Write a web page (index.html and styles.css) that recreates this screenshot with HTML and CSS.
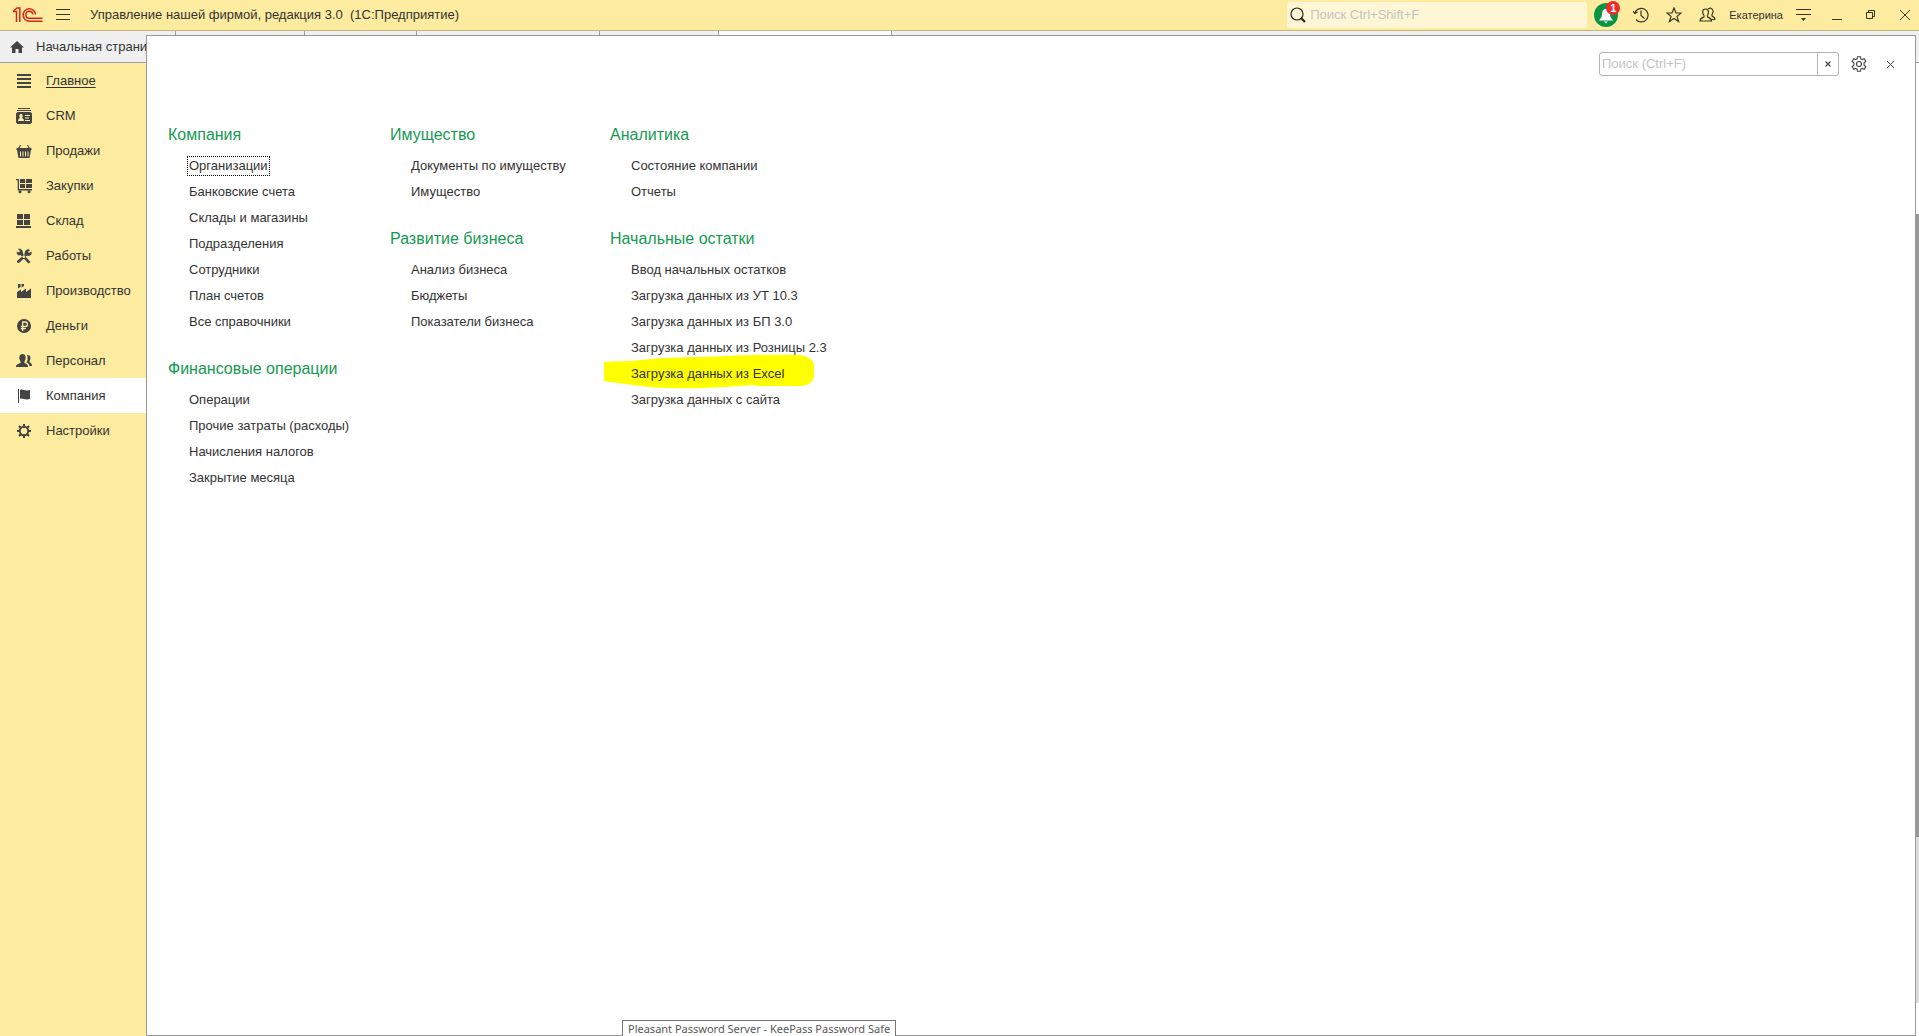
FILE: index.html
```html
<!DOCTYPE html>
<html lang="ru">
<head>
  <meta charset="UTF-8">
  <title>Управление нашей фирмой, редакция 3.0</title>
  <link rel="stylesheet" href="styles.css">
</head>
<body>
  <header class="titlebar">
    <svg class="logo" width="30" height="16" viewBox="0 0 30 16" fill="none" stroke="#d9261c" stroke-width="1.500">
      <path d="M0 4.500h3.500V15M0 4.500L4 1h2.800v14"/>
      <path d="M22.500 7.500A6.200 6.200 0 1 0 16.500 14.200H29.500M19.800 7.500A3.500 3.500 0 1 0 16.500 11.300H29.500"/>
    </svg>
    <button class="icon-btn menu-btn" aria-label="Меню">
      <svg width="14" height="12" viewBox="0 0 14 12" stroke="#3a3520"><path d="M0 .5h14M0 5.500h14M0 10.500h14"/></svg>
    </button>
    <h1 class="title">Управление нашей фирмой, редакция 3.0&nbsp; (1С:Предприятие)</h1>
    <label class="global-search">
      <svg width="16" height="16" viewBox="0 0 16 16" fill="none" stroke="#2b2718"><circle cx="7" cy="7" r="6" stroke-width="1.200"/><path d="M11 11l4 4" stroke-width="2.200"/></svg>
      <input type="text" placeholder="Поиск Ctrl+Shift+F" aria-label="Поиск Ctrl+Shift+F">
    </label>
    <div class="tools">
      <button class="bell" aria-label="Уведомления">
        <svg width="24" height="24" viewBox="0 0 24 24"><circle cx="12" cy="12" r="12" fill="#0b9444"/><path d="M12 6c-3 0-4 2.500-4 5.500 0 2.500-1.500 4-3 6h14c-1.500-2-3-3.500-3-6C16 8.500 15 6 12 6zM10 18.500h4l-2 2z" fill="#fff"/></svg>
        <span class="badge">1</span>
      </button>
      <button class="icon-btn" aria-label="История">
        <svg width="16" height="16" viewBox="0 0 16 16" fill="none" stroke="#3a3520" stroke-width="1.200"><path d="M1.800 6A6.800 6.800 0 1 1 3 12.500M0 4l1.800 2.500L4.500 5M8 3.500v5l3.500 3"/></svg>
      </button>
      <button class="icon-btn" aria-label="Избранное">
        <svg width="16" height="16" viewBox="0 0 16 16" fill="none" stroke="#3a3520" stroke-width="1.200"><path d="M8 1l2 5h5.200l-4.200 3.400 1.600 5.200L8 11.500l-4.600 3.100L5 9.400.8 6H6z"/></svg>
      </button>
      <button class="icon-btn" aria-label="Пользователь">
        <svg width="17" height="16" viewBox="0 0 17 16" fill="none" stroke="#3a3520" stroke-width="1.200"><path d="M1 14c0-2.500 2-3 4-4V8.500C3 6 3 2 6.500 2S10 6 8.500 8.500V10c2 1 4 1.500 4 4zM9 2c4-2.500 6.500 2 4 5.500V9c1.500.8 3 1.500 3 3.500h-4"/></svg>
      </button>
      <a href="#" class="user">Екатерина</a>
      <button class="icon-btn" aria-label="Сервис">
        <svg width="15" height="14" viewBox="0 0 15 14" fill="none" stroke="#3a3520" stroke-width="1.200"><path d="M0 1.500h15M0 6.500h15"/><path d="M5 10h5l-2.500 3z" fill="#3a3520" stroke="none"/></svg>
      </button>
      <button class="icon-btn win-btn" aria-label="Свернуть">
        <svg width="10" height="10" viewBox="0 0 10 10" stroke="#3a3520"><path d="M0 9.500h10"/></svg>
      </button>
      <button class="icon-btn win-btn" aria-label="Восстановить">
        <svg width="10" height="10" viewBox="0 0 10 10" fill="none" stroke="#3a3520"><path d="M.5 2.500h6v6h-6zM2.500 2.500v-2h6v6h-2"/></svg>
      </button>
      <button class="icon-btn win-btn" aria-label="Закрыть">
        <svg width="10" height="10" viewBox="0 0 10 10" stroke="#3a3520"><path d="M0 0l10 10M10 0L0 10"/></svg>
      </button>
    </div>
  </header>

  <nav class="tabs">
    <a href="#" class="tab tab-home">
      <svg width="14" height="12" viewBox="0 0 14 12" fill="#444"><path d="M7 0l7 6.500h-2V12H8.500V8h-3v4H2V6.500H0z"/></svg>
      Начальная страница
    </a>
    <span class="tab tab-2"></span>
    <span class="tab tab-3"></span>
    <span class="tab tab-4"></span>
    <span class="tab tab-5"></span>
    <span class="tab tab-active"></span>
  </nav>

  <div class="workspace">
    <nav class="sidebar">
      <a href="#" class="section current">
        <svg viewBox="0 0 16 16"><path d="M1 1h14v2H1zM1 5h14v2H1zM1 9h14v2H1zM1 13h14v2H1z"/></svg>
        Главное
      </a>
      <a href="#" class="section">
        <svg viewBox="0 0 16 16"><path d="M2 0h12v1H2zM1 2h14v1H1z"/><path fill-rule="evenodd" d="M1.500 4h13L16 5.500v9L14.500 16h-13L0 14.500v-9zM2 13h6c0-2-1-2.500-2-3 1-1.500.8-4-1-4s-2 2.500-1 4c-1 .5-2 1-2 3zM9 7v1h5V7zM9 9.500v1h4v-1zM9 12v1h5v-1z"/></svg>
        CRM
      </a>
      <a href="#" class="section">
        <svg viewBox="0 0 16 16"><path d="M4 2l1 .5L3.500 5h9L11 2.500l1-.5 2 3h1.500v2H.5V5H2z"/><path fill-rule="evenodd" d="M1 7h14l-1.500 8h-11zM4 8.500v5h1v-5zM6.500 8.500v5h1v-5zM9 8.500v5h1v-5zM11.500 8.500v5h1v-5z"/></svg>
        Продажи
      </a>
      <a href="#" class="section">
        <svg viewBox="0 0 16 16"><path d="M0 1h3v10h13v1.500H1.700V2.200H0zM4 1h5v4H4zM10 1h6v4h-6zM4 6h5v4H4zM10 6h6v4h-6z"/><circle cx="4" cy="13.800" r="1.500"/><circle cx="13" cy="13.800" r="1.500"/></svg>
        Закупки
      </a>
      <a href="#" class="section">
        <svg viewBox="0 0 16 16"><path d="M1 1h6v5H1zM8 1h6v5H8zM1 7h6v5H1zM8 7h6v5H8zM0 13h15v2H0z"/></svg>
        Склад
      </a>
      <a href="#" class="section">
        <svg viewBox="0 0 16 16"><path d="M2 1l2 2-1 1.500L1 3.500C0 6 2 8 4.500 7L11 14l1.500 1.500L14.500 14 7 6C7.500 3 5 0 2 1zM9 3l3-2 2 1-2 2 1 1 2.500-1.500c1 3-2 5.500-4.500 4L3 15l-2-.5L1 13l7.500-6.500z"/></svg>
        Работы
      </a>
      <a href="#" class="section">
        <svg viewBox="0 0 16 16"><path d="M1 15V9l4-2.500V9l5-3.500V9l5-3.500V15zM2 1h2.500v3L2 5.500zM5.500 1H8v2L5.500 4.500z"/></svg>
        Производство
      </a>
      <a href="#" class="section">
        <svg viewBox="0 0 16 16"><circle cx="8" cy="8" r="7"/><path d="M6.700 13V4h2.500a2.200 2.200 0 0 1 0 4.500H4.800M4.800 10.700h5" fill="none" stroke="#fdeca0" stroke-width="1.300"/></svg>
        Деньги
      </a>
      <a href="#" class="section">
        <svg viewBox="0 0 16 16"><path d="M0 14c0-3 2.500-3 4.500-4V8.500C2.500 5.500 3 1 6.500 1S10.500 5.500 8.500 8.500V10c2 1 3.500 1 3.500 4zM11 2c3.500-.5 4.500 3 2.500 6v1.200c1.500.8 2.500 1 2.500 3.800h-2.500c0-2-1.500-2.800-3-3.500C12 7 12 4.500 11 2z"/></svg>
        Персонал
      </a>
      <a href="#" class="section selected">
        <svg viewBox="0 0 16 16"><path d="M2 1h1v14H2zM4 2c3-1.500 4 1.500 10 0v9c-6 1.500-7-1.500-10 0z"/></svg>
        Компания
      </a>
      <a href="#" class="section">
        <svg viewBox="0 0 16 16"><circle cx="8" cy="8" r="4.200" fill="none" stroke="#444" stroke-width="2"/><path d="M8 1v2.500M8 12.500V15M1 8h2.500M12.500 8H15M3 3l2 2M11 11l2 2M13 3l-2 2M5 11l-2 2" stroke="#444" stroke-width="2"/></svg>
        Настройки
      </a>
    </nav>
    <div class="page-back"><span class="scroll-track"><span class="scroll-thumb"></span></span></div>
  </div>

  <main class="panel">
    <div class="panel-bar">
      <div class="panel-search">
        <input type="text" placeholder="Поиск (Ctrl+F)" aria-label="Поиск (Ctrl+F)">
        <button aria-label="Очистить">
          <svg width="6" height="6" viewBox="0 0 6 6" stroke="#444" stroke-width="1.200"><path d="M.5.5l5 5M5.500.5l-5 5"/></svg>
        </button>
      </div>
      <button class="icon-btn gear-btn" aria-label="Настройка">
        <svg width="16" height="16" viewBox="0 0 16 16" fill="none" stroke="#444" stroke-width="1.100"><circle cx="8" cy="8" r="2.500"/><path d="M6.500.7h3l.4 2.200 1.300.7 2.100-.8 1.500 2.600-1.700 1.400v2.400l1.700 1.400-1.500 2.600-2.100-.8-1.300.7-.4 2.200h-3l-.4-2.200-1.300-.7-2.100.8-1.500-2.600 1.700-1.400V6.800L1.200 5.400l1.500-2.600 2.100.8 1.300-.7z"/></svg>
      </button>
      <button class="icon-btn close-btn" aria-label="Закрыть">
        <svg width="7" height="7" viewBox="0 0 7 7" stroke="#444"><path d="M0 0l7 7M7 0L0 7"/></svg>
      </button>
    </div>

    <div class="columns">
      <div class="column">
        <section class="group">
          <h2>Компания</h2>
          <ul>
            <li><a href="#" class="focused">Организации</a></li>
            <li><a href="#">Банковские счета</a></li>
            <li><a href="#">Склады и магазины</a></li>
            <li><a href="#">Подразделения</a></li>
            <li><a href="#">Сотрудники</a></li>
            <li><a href="#">План счетов</a></li>
            <li><a href="#">Все справочники</a></li>
          </ul>
        </section>
        <section class="group">
          <h2>Финансовые операции</h2>
          <ul>
            <li><a href="#">Операции</a></li>
            <li><a href="#">Прочие затраты (расходы)</a></li>
            <li><a href="#">Начисления налогов</a></li>
            <li><a href="#">Закрытие месяца</a></li>
          </ul>
        </section>
      </div>
      <div class="column">
        <section class="group">
          <h2>Имущество</h2>
          <ul>
            <li><a href="#">Документы по имуществу</a></li>
            <li><a href="#">Имущество</a></li>
          </ul>
        </section>
        <section class="group">
          <h2>Развитие бизнеса</h2>
          <ul>
            <li><a href="#">Анализ бизнеса</a></li>
            <li><a href="#">Бюджеты</a></li>
            <li><a href="#">Показатели бизнеса</a></li>
          </ul>
        </section>
      </div>
      <div class="column">
        <section class="group">
          <h2>Аналитика</h2>
          <ul>
            <li><a href="#">Состояние компании</a></li>
            <li><a href="#">Отчеты</a></li>
          </ul>
        </section>
        <section class="group">
          <h2>Начальные остатки</h2>
          <ul>
            <li><a href="#">Ввод начальных остатков</a></li>
            <li><a href="#">Загрузка данных из УТ 10.3</a></li>
            <li><a href="#">Загрузка данных из БП 3.0</a></li>
            <li><a href="#">Загрузка данных из Розницы 2.3</a></li>
            <li class="marked">
              <svg class="marker" width="210" height="36" viewBox="0 0 210 36"><path d="M0 8Q18 7 28 7Q60 3 100 3Q150 0 196 1Q210 4 210 11V23Q209 30 198 32H152L150 31Q125 33 100 34Q70 35 45 33Q28 31 0 27z" fill="#ff0"/></svg>
              <a href="#">Загрузка данных из Excel</a>
            </li>
            <li><a href="#">Загрузка данных с сайта</a></li>
          </ul>
        </section>
      </div>
    </div>
  </main>

  <div class="taskbar-tip" role="tooltip">Pleasant Password Server - KeePass Password Safe</div>
</body>
</html>
```

FILE: styles.css
```css
* {
  box-sizing: border-box;
}
body {
  margin: 0;
  height: 100vh;
  display: flex;
  flex-direction: column;
  position: relative;
  overflow: hidden;
  font-family: "Liberation Sans", Arial, sans-serif;
  font-size: 13px;
  line-height: 16px;
  color: #333;
  background: #fff;
}
a {
  color: inherit;
  text-decoration: none;
}
button {
  padding: 0;
  border: 0;
  background: none;
  font: inherit;
}
input {
  font: inherit;
  border: 0;
  outline: 0;
  background: none;
}
svg {
  display: block;
  flex: none;
}

/* title bar */
.titlebar {
  flex: none;
  height: 31px;
  display: flex;
  align-items: center;
  padding: 0 6px 0 13px;
  background: #fdeca0;
  border-bottom: 1px solid #c2b67c;
}
.menu-btn {
  margin-left: 13px;
}
.title {
  margin: 0 auto 0 20px;
  font-size: 13px;
  font-weight: normal;
}
.icon-btn {
  display: flex;
  align-items: center;
  justify-content: center;
}
.global-search {
  width: 300px;
  height: 26px;
  display: flex;
  align-items: center;
  gap: 4px;
  padding: 0 3px;
  border-radius: 3px;
  background: #fff6d6;
}
.global-search input {
  flex: 1;
  min-width: 0;
  padding: 0;
}
input::placeholder {
  color: #c4c4c4;
  opacity: 1;
}
.tools {
  display: flex;
  align-items: center;
  gap: 17px;
  margin-left: 7px;
}
.bell {
  position: relative;
  margin-right: -2px;
}
.badge {
  position: absolute;
  top: -2px;
  right: -2px;
  width: 14px;
  height: 14px;
  border-radius: 50%;
  background: #ee2a2f;
  color: #fff;
  font-size: 11px;
  font-weight: bold;
  line-height: 14px;
  text-align: center;
}
.user {
  font-size: 11px;
  margin: 0 -4px;
}
.win-btn {
  width: 17px;
}

/* open windows */
.tabs {
  flex: none;
  height: 32px;
  display: flex;
  background: #f0f0f0;
  border-bottom: 1px solid #a0a0a0;
}
.tab {
  border-right: 1px solid #a0a0a0;
}
.tab-home {
  width: 176px;
  display: flex;
  align-items: center;
  gap: 12px;
  padding-left: 10px;
  white-space: nowrap;
}
.tab-2 {
  width: 129px;
}
.tab-3 {
  width: 112px;
}
.tab-4 {
  width: 183px;
}
.tab-5 {
  width: 119px;
}
.tab-active {
  width: 173px;
  background: #fff;
}

/* sections */
.workspace {
  flex: 1;
  display: flex;
}
.sidebar {
  width: 146px;
  background: #fdeca0;
}
.section {
  height: 35px;
  display: flex;
  align-items: center;
  gap: 14px;
  padding: 1px 0 0 16px;
}
.section svg {
  width: 16px;
  height: 16px;
  fill: #444;
}
.current {
  text-decoration: underline;
  text-underline-offset: 2px;
}
.selected {
  background: #fff;
}
.page-back {
  flex: 1;
  display: flex;
  justify-content: flex-end;
  padding: 151px 0 33px;
}
.scroll-track {
  width: 3px;
  background: #dcdcdc;
}
.scroll-thumb {
  display: block;
  height: 79%;
  background: #999;
}

/* section menu lies over the open window */
.panel {
  position: absolute;
  top: 35px;
  right: 3px;
  bottom: 0;
  left: 146px;
  background: #fff;
  border: 1px solid #999;
}
.panel-bar {
  display: flex;
  justify-content: flex-end;
  align-items: center;
  padding: 16px 21px 0 0;
}
.panel-search {
  width: 240px;
  height: 24px;
  display: flex;
  border: 1px solid #b3b3b3;
  border-radius: 3px;
}
.panel-search input {
  flex: 1;
  min-width: 0;
  padding: 0 2px;
}
.panel-search button {
  width: 21px;
  display: flex;
  align-items: center;
  justify-content: center;
  border-left: 1px solid #b3b3b3;
}
.gear-btn {
  margin-left: 12px;
}
.close-btn {
  margin-left: 20px;
}
.columns {
  display: grid;
  grid-template-columns: 222px 220px auto;
  padding: 41px 21px 0;
}
.group {
  margin-bottom: 16px;
}
.group h2 {
  margin: 0;
  font-size: 16px;
  font-weight: normal;
  line-height: 36px;
  color: #159a52;
}
.group ul {
  margin: 0;
  padding: 0 0 0 19px;
  list-style: none;
}
.group li {
  height: 26px;
  display: flex;
  align-items: center;
}
.group li a {
  padding: 1px;
  border: 1px solid transparent;
  white-space: nowrap;
}
.group li .focused {
  border: 1px dotted #000;
}
.marked {
  position: relative;
}
.marked a {
  position: relative;
}
.marker {
  position: absolute;
  top: -7px;
  left: -25px;
}

.taskbar-tip {
  position: absolute;
  left: 622px;
  bottom: 0;
  padding: 0 5px;
  border: 1px solid #767676;
  border-bottom: 0;
  background: #fff;
  color: #575757;
  font-family: "Noto Sans", "Open Sans", sans-serif;
  font-size: 11px;
  line-height: 15px;
  white-space: nowrap;
}
```
